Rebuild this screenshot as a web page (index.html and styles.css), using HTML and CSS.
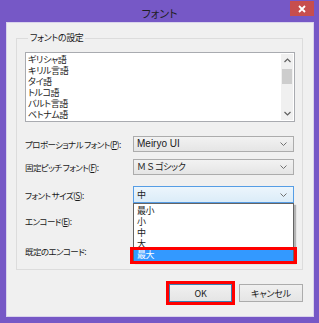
FILE: index.html
```html
<!DOCTYPE html>
<html lang="ja">
<head>
<meta charset="utf-8">
<link rel="stylesheet" href="styles.css">
</head>
<body>
<div class="window">
  <div class="titlebar">
    <span></span>
    <span class="title">フォント</span>
    <span class="close"><svg width="8" height="8" viewBox="0 0 8 8"><path d="M1 1L7 7M7 1L1 7" stroke="#fff" stroke-width="1.8"/></svg></span>
  </div>
  <div class="client">
    <fieldset class="group">
      <legend>フォントの設定</legend>
      <div class="listbox">
        <ul class="items">
          <li>ギリシャ語</li>
          <li>キリル言語</li>
          <li>タイ語</li>
          <li>トルコ語</li>
          <li>バルト言語</li>
          <li>ベトナム語</li>
        </ul>
        <div class="vscroll">
          <svg class="arr" width="7" height="5" viewBox="0 0 7 5"><path d="M0.5 4L3.5 1L6.5 4" fill="none" stroke="#606060" stroke-width="1.2"/></svg>
          <div class="track"><div class="thumb"></div></div>
          <svg class="arr" width="7" height="5" viewBox="0 0 7 5"><path d="M0.5 1L3.5 4L6.5 1" fill="none" stroke="#606060" stroke-width="1.2"/></svg>
        </div>
      </div>
      <div class="rows">
        <div class="row r1">
          <span class="label">プロポーショナル フォント(<u>P</u>):</span>
          <div class="combo"><span class="val latin">Meiryo UI</span><svg width="7" height="4" viewBox="0 0 7 4"><path d="M0.5 0.5L3.5 3.5L6.5 0.5" fill="none" stroke="#707070" stroke-width="1"/></svg></div>
        </div>
        <div class="row r2">
          <span class="label">固定ピッチ フォント(<u>F</u>):</span>
          <div class="combo"><span class="val">Ｍ Ｓ ゴシック</span><svg width="7" height="4" viewBox="0 0 7 4"><path d="M0.5 0.5L3.5 3.5L6.5 0.5" fill="none" stroke="#707070" stroke-width="1"/></svg></div>
        </div>
        <div class="row r3">
          <span class="label">フォント サイズ(<u>S</u>):</span>
          <div class="combo open"><span class="val">中</span><svg width="7" height="4" viewBox="0 0 7 4"><path d="M0.5 0.5L3.5 3.5L6.5 0.5" fill="none" stroke="#707070" stroke-width="1"/></svg>
            <ul class="dropdown">
              <li>最小</li>
              <li>小</li>
              <li>中</li>
              <li>大</li>
              <li class="sel">最大</li>
            </ul>
            <div class="mark mark-list"></div>
          </div>
        </div>
        <div class="row r4">
          <span class="label">エンコード(<u>E</u>):</span>
        </div>
        <div class="row r5">
          <span class="label">既定のエンコード:</span>
        </div>
      </div>
    </fieldset>
    <div class="buttons">
      <div class="okwrap"><button class="btn default">OK</button></div>
      <button class="btn">キャンセル</button>
    </div>
  </div>
</div>
</body>
</html>
```
FILE: styles.css
```css
* { box-sizing: border-box; }
html, body { margin: 0; padding: 0; }
body {
  width: 319px;
  height: 323px;
  overflow: hidden;
  font-family: "Noto Sans CJK JP", "Noto Sans", sans-serif;
  font-feature-settings: "palt";
  font-size: 9px;
  letter-spacing: -0.4px;
  color: #1a1a1a;
}
.window {
  width: 319px;
  height: 323px;
  background: #7658c6;
  display: flex;
  flex-direction: column;
}
.titlebar {
  height: 22px;
  display: grid;
  grid-template-columns: 1fr auto 1fr;
  align-items: start;
}
.title {
  font-size: 11px;
  letter-spacing: 0;
  line-height: 14px;
  margin-top: 6px;
  color: #1e1e1e;
}
.close {
  justify-self: end;
  margin-right: 5px;
  margin-top: 1px;
  width: 24px;
  height: 15px;
  background: #c74e4e;
  display: flex;
  align-items: center;
  justify-content: center;
}
.client {
  margin: 0 5px 6px 6px;
  flex: 1;
  background: #f0f0f0;
  border: 1px solid #d9d3ec;
  display: flex;
  flex-direction: column;
}
.group {
  margin: 9px 0 0 9px;
  width: 287px;
  height: 238px;
  padding: 0 7px 0 8px;
  border: 1px solid #dcdcdc;
  border-radius: 0;
  min-width: 0;
}
.group legend {
  padding: 0 2px;
  margin-left: 3px;
  line-height: 12px;
}
.listbox {
  margin-top: 8px;
  height: 70px;
  width: 270px;
  border: 1px solid #a9abb0;
  background: #fff;
  display: flex;
}
.items {
  list-style: none;
  margin: 0;
  padding: 1px 0 0 2px;
  flex: 1;
}
.items li {
  height: 11px;
  line-height: 11px;
}
.vscroll {
  width: 12px;
  margin: 1px 1px 1px 0;
  background: #f0f0f0;
  display: flex;
  flex-direction: column;
  align-items: center;
}
.vscroll .arr { margin: 4px 0; }
.track { flex: 1; width: 100%; padding-top: 2px; }
.thumb { height: 15px; background: #cdcdcd; margin: 0 1px; }
.rows {
  display: flex;
  flex-direction: column;
}
.row {
  display: grid;
  grid-template-columns: 108px 161px;
  align-items: center;
  height: 16px;
  line-height: 12px;
}
.r1 { margin-top: 14px; }
.r2 { margin-top: 7px; }
.r3 { margin-top: 11px; height: 17px; }
.r4 { margin-top: 10px; }
.r5 { margin-top: 14px; }
.label {
  white-space: nowrap;
  font-size: 8.5px;
  letter-spacing: -0.6px;
}
.label u { text-decoration: underline; }
.combo {
  position: relative;
  height: 100%;
  border: 1px solid #acacac;
  background: linear-gradient(#f2f2f2, #e5e5e5);
  display: flex;
  align-items: center;
  justify-content: space-between;
  padding: 0 6px 0 3px;
}
.combo .val { line-height: 12px; }
.latin { font-family: "Liberation Sans", "Noto Sans CJK JP", sans-serif; font-size: 10px; letter-spacing: 0; }
.combo.open {
  border-color: #569de5;
  background: linear-gradient(#ecf5fc, #dbecf8);
}
.dropdown {
  position: absolute;
  left: -1px;
  top: 16px;
  width: 161px;
  margin: 0;
  padding: 1px 0 0;
  list-style: none;
  background: #fff;
  border: 1px solid #646464;
  box-shadow: 2px 2px 1px rgba(0,0,0,0.25);
  z-index: 2;
}
.dropdown li {
  height: 11px;
  line-height: 11px;
  padding-left: 3px;
}
.dropdown li.sel {
  background: #3399ff;
  color: #fff;
  height: 12px;
}
.mark {
  position: absolute;
  border: 3px solid #ff0000;
  z-index: 3;
}
.mark-list {
  left: -4px;
  top: 60px;
  width: 167px;
  height: 17px;
}
.buttons {
  display: flex;
  justify-content: flex-end;
  align-items: center;
  gap: 4px;
  margin: 11px 10px 0 0;
}
.okwrap {
  border: 3px solid #ff0000;
  padding: 0;
}
.btn {
  font-family: "Noto Sans CJK JP", sans-serif;
  font-feature-settings: "palt";
  font-size: 9px;
  letter-spacing: -0.2px;
  width: 64px;
  height: 18px;
  border: 1px solid #acacac;
  background: linear-gradient(#f0f0f0, #e5e5e5);
  color: #1a1a1a;
  padding: 0;
}
.btn.default {
  border-color: #3c7fb1;
  width: 63px;
}
```
